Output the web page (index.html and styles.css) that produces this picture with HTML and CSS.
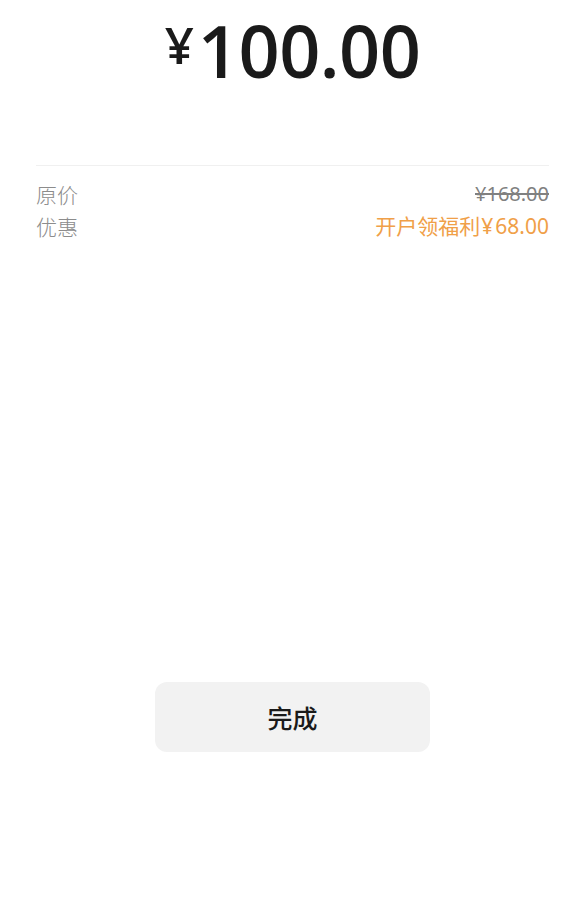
FILE: index.html
```html
<!DOCTYPE html>
<html lang="zh-CN">
<head>
<meta charset="utf-8">
<title>支付结果</title>
<link rel="stylesheet" href="styles.css">
</head>
<body>
<div class="page">
  <div class="amount">
    <span class="yen">¥</span><span class="num">100.00</span>
  </div>
  <div class="details">
    <div class="row">
      <span class="label">原价</span>
      <span class="orig">¥168.00</span>
    </div>
    <div class="row">
      <span class="label">优惠</span>
      <span class="discount">开户领福利<span class="cur">¥</span>68.00</span>
    </div>
  </div>
  <div class="actions">
    <button class="done">完成</button>
  </div>
</div>
</body>
</html>
```
FILE: styles.css
```css
html, body {
  margin: 0;
  padding: 0;
  background: #ffffff;
}
.page {
  width: 585px;
  height: 906px;
  font-family: "Noto Sans", "Noto Sans CJK SC", sans-serif;
  color: #1a1a1a;
}
.amount {
  display: flex;
  justify-content: center;
  align-items: flex-start;
  padding-top: 14px;
  height: 72px;
  font-family: "Open Sans", "Noto Sans", sans-serif;
}
.yen {
  font-size: 51px;
  line-height: 51px;
  font-weight: 600;
  margin-top: 5px;
  margin-right: 4px;
}
.num {
  font-size: 72px;
  line-height: 72px;
  font-weight: 600;
  letter-spacing: -0.5px;
}
.details {
  margin: 79px 36px 0 36px;
  border-top: 1px solid #f0f0f0;
  padding-top: 12px;
}
.row {
  display: flex;
  justify-content: space-between;
  align-items: center;
  height: 32px;
  font-size: 21px;
  line-height: 32px;
}
.label {
  color: #8c8c8c;
  font-family: "Noto Sans CJK SC", sans-serif;
  font-weight: 300;
}
.orig {
  font-size: 20px;
  color: #808080;
  text-decoration: line-through;
}
.discount {
  color: #f0a048;
}
.cur {
  margin: 0 2px 0 1px;
}
.actions {
  display: flex;
  justify-content: center;
  margin-top: 440px;
}
.done {
  width: 275px;
  height: 70px;
  border: none;
  border-radius: 12px;
  background: #f2f2f2;
  font-family: "Noto Sans CJK SC", "Noto Sans", sans-serif;
  font-size: 25px;
  font-weight: 500;
  color: #1a1a1a;
  padding: 0;
}
```
